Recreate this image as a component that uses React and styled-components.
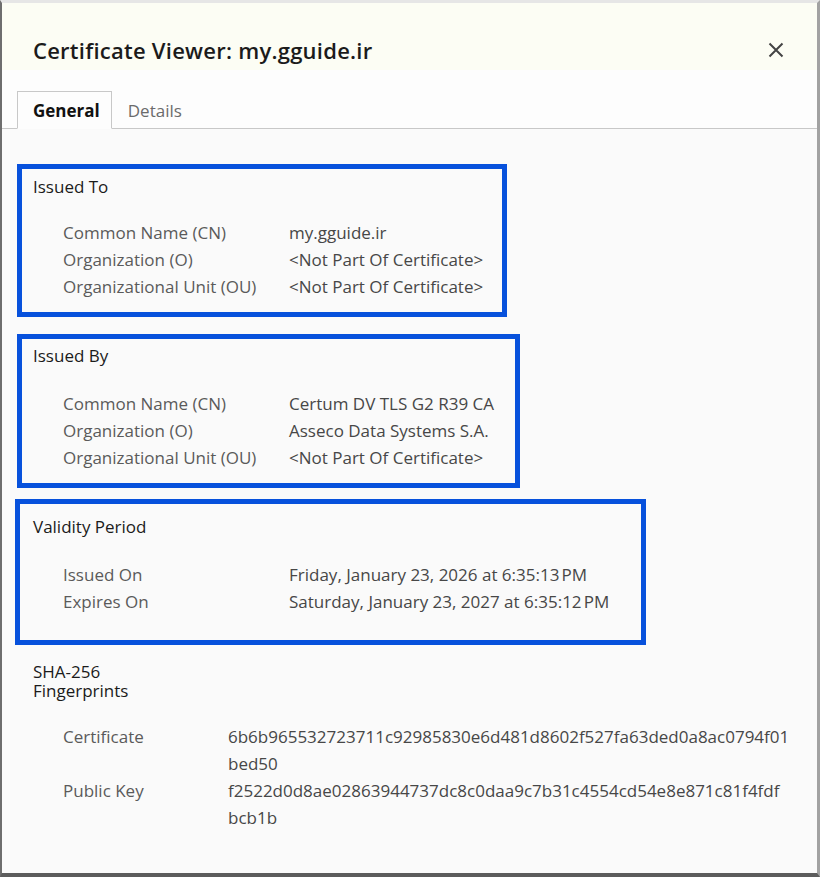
import React from "react";
import styled, { createGlobalStyle } from "styled-components";

const GlobalStyle = createGlobalStyle`
  html, body { margin: 0; padding: 0; background: #fafafa; }
  body { font-family: "Open Sans", "Noto Sans", sans-serif; }
  * { box-sizing: border-box; }
`;

const Frame = styled.div`
  width: 820px;
  height: 877px;
  border-top: 3px solid #e6e6e6;
  border-left: 2px solid #6e6e6e;
  border-right: 3px solid #a2a2a2;
  border-bottom: 4px solid #5c5c5c;
  background: #fafafa;
  display: flex;
  flex-direction: column;
  overflow: hidden;
`;

const Header = styled.div`
  height: 67px;
  background: #fcfdf4;
  display: flex;
  align-items: center;
  justify-content: space-between;
  padding: 27px 31px 0 31px;
`;

const Title = styled.h1`
  margin: 0;
  font-size: 22px;
  font-weight: 600;
  color: #1b1b1b;
  letter-spacing: 0.25px;
`;

const CloseButton = styled.button`
  border: none;
  background: transparent;
  padding: 0;
  width: 20px;
  height: 20px;
  display: flex;
  align-items: center;
  justify-content: center;
  color: #444;
  cursor: pointer;
`;

const TabBar = styled.div`
  height: 59px;
  background: #fdfdfd;
  border-bottom: 1px solid #c8c8c8;
  display: flex;
  align-items: flex-end;
  padding-left: 15px;
`;

const Tab = styled.div`
  height: 38px;
  margin-bottom: -1px;
  padding: 0 ${(p) => (p.$active ? "11px" : "17px")} 0 15px;
  display: flex;
  align-items: center;
  font-size: 17px;
  font-weight: ${(p) => (p.$active ? 700 : 400)};
  color: ${(p) => (p.$active ? "#111" : "#6b6b6b")};
  background: ${(p) => (p.$active ? "#fdfdfd" : "transparent")};
  border: 1px solid ${(p) => (p.$active ? "#c8c8c8" : "transparent")};
  border-bottom: 1px solid ${(p) => (p.$active ? "#fdfdfd" : "transparent")};
`;

const Body = styled.div`
  flex: 1;
  padding-top: 35px;
  display: flex;
  flex-direction: column;
  align-items: flex-start;
`;

const Section = styled.section`
  width: ${(p) => p.$width}px;
  margin: ${(p) => p.$mt}px 0 0 ${(p) => p.$ml}px;
  border: 5px solid #0751dc;
  padding: ${(p) => p.$pt}px 0 ${(p) => p.$pb}px ${(p) => p.$pl}px;
`;

const SectionTitle = styled.div`
  font-size: 17px;
  line-height: 22px;
  color: #1b1b1b;
`;

const FieldGrid = styled.div`
  display: grid;
  grid-template-columns: ${(p) => p.$labelWidth}px auto;
  margin-top: ${(p) => p.$gap}px;
  padding-left: 30px;
  font-size: 17px;
  line-height: 27px;
`;

const Label = styled.div`
  color: #5a5a5a;
  white-space: nowrap;
`;

const Value = styled.div`
  color: #474747;
  white-space: nowrap;
`;

const Fingerprints = styled.section`
  margin: 17px 0 0 31px;
`;

const FingerTitle = styled.div`
  width: 110px;
  font-size: 17px;
  line-height: 19px;
  color: #1b1b1b;
`;

const HashLine = styled.span`
  display: block;
`;

const Close = () => (
  <svg width="16" height="16" viewBox="0 0 16 16" fill="none">
    <path d="M1.5 1.5 L14.5 14.5 M14.5 1.5 L1.5 14.5" stroke="currentColor" strokeWidth="2" />
  </svg>
);

const sections = [
  {
    title: "Issued To",
    width: 490, ml: 15, mt: 0, pt: 7, pb: 12, pl: 11, gap: 21, labelWidth: 226,
    rows: [
      ["Common Name (CN)", "my.gguide.ir"],
      ["Organization (O)", "<Not Part Of Certificate>"],
      ["Organizational Unit (OU)", "<Not Part Of Certificate>"],
    ],
  },
  {
    title: "Issued By",
    width: 503, ml: 15, mt: 17, pt: 6, pb: 12, pl: 11, gap: 23, labelWidth: 226,
    rows: [
      ["Common Name (CN)", "Certum DV TLS G2 R39 CA"],
      ["Organization (O)", "Asseco Data Systems S.A."],
      ["Organizational Unit (OU)", "<Not Part Of Certificate>"],
    ],
  },
  {
    title: "Validity Period",
    width: 631, ml: 13, mt: 11, pt: 12, pb: 25, pl: 13, gap: 23, labelWidth: 226,
    rows: [
      ["Issued On", "Friday, January 23, 2026 at 6:35:13\u202FPM"],
      ["Expires On", "Saturday, January 23, 2027 at 6:35:12\u202FPM"],
    ],
  },
];

const hashes = [
  ["Certificate", "6b6b965532723711c92985830e6d481d8602f527fa63ded0a8ac0794f01bed50"],
  ["Public Key", "f2522d0d8ae02863944737dc8c0daa9c7b31c4554cd54e8e871c81f4fdfbcb1b"],
];

export default function App() {
  return (
    <>
      <GlobalStyle />
      <Frame>
        <Header>
          <Title>Certificate Viewer: my.gguide.ir</Title>
          <CloseButton aria-label="Close">
            <Close />
          </CloseButton>
        </Header>
        <TabBar>
          <Tab $active>General</Tab>
          <Tab>Details</Tab>
        </TabBar>
        <Body>
          {sections.map((s) => (
            <Section key={s.title} $width={s.width} $ml={s.ml} $mt={s.mt} $pt={s.pt} $pb={s.pb} $pl={s.pl}>
              <SectionTitle>{s.title}</SectionTitle>
              <FieldGrid $labelWidth={s.labelWidth} $gap={s.gap}>
                {s.rows.map(([l, v]) => (
                  <React.Fragment key={l}>
                    <Label>{l}</Label>
                    <Value>{v}</Value>
                  </React.Fragment>
                ))}
              </FieldGrid>
            </Section>
          ))}
          <Fingerprints>
            <FingerTitle>SHA-256 Fingerprints</FingerTitle>
            <FieldGrid $labelWidth={165} $gap={23}>
              {hashes.map(([l, v]) => (
                <React.Fragment key={l}>
                  <Label>{l}</Label>
                  <Value>
                    <HashLine>{v.slice(0, 59)}</HashLine>
                    <HashLine>{v.slice(59)}</HashLine>
                  </Value>
                </React.Fragment>
              ))}
            </FieldGrid>
          </Fingerprints>
        </Body>
      </Frame>
    </>
  );
}
